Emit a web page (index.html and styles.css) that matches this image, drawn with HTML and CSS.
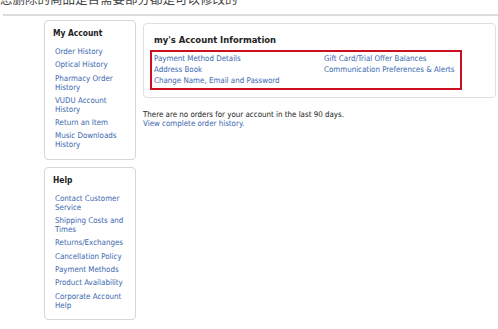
FILE: index.html
```html
<!DOCTYPE html>
<html lang="en">
<head>
    <meta charset="UTF-8">
    <title>Your Account</title>
    <link rel="stylesheet" href="styles.css">
</head>
<body>
    <div class="topnote"><span>您删除的商品是否需要部分都是可以修改的</span></div>
    <div class="rule"></div>

    <div class="page">
        <aside class="sidebar">
            <div class="side-box">
                <h3>My Account</h3>
                <ul>
                    <li><a href="#">Order History</a></li>
                    <li><a href="#">Optical History</a></li>
                    <li><a href="#">Pharmacy Order History</a></li>
                    <li><a href="#">VUDU Account History</a></li>
                    <li><a href="#">Return an Item</a></li>
                    <li><a href="#">Music Downloads History</a></li>
                </ul>
            </div>
            <div class="side-box">
                <h3>Help</h3>
                <ul>
                    <li><a href="#">Contact Customer Service</a></li>
                    <li><a href="#">Shipping Costs and Times</a></li>
                    <li><a href="#">Returns/Exchanges</a></li>
                    <li><a href="#">Cancellation Policy</a></li>
                    <li><a href="#">Payment Methods</a></li>
                    <li><a href="#">Product Availability</a></li>
                    <li><a href="#">Corporate Account Help</a></li>
                </ul>
            </div>
        </aside>

        <main class="content">
            <div class="info-box">
                <h2>my's Account Information</h2>
                <div class="highlight">
                    <ul class="col-left">
                        <li><a href="#">Payment Method Details</a></li>
                        <li><a href="#">Address Book</a></li>
                        <li><a href="#">Change Name, Email and Password</a></li>
                    </ul>
                    <ul class="col-right">
                        <li><a href="#">Gift Card/Trial Offer Balances</a></li>
                        <li><a href="#">Communication Preferences &amp; Alerts</a></li>
                    </ul>
                </div>
            </div>
            <p class="orders">There are no orders for your account in the last 90 days.<br>
                <a href="#">View complete order history.</a></p>
        </main>
    </div>
</body>
</html>
```

FILE: styles.css
```css
* {
    margin: 0;
    padding: 0;
    box-sizing: border-box;
}

body {
    background: #ffffff;
    color: #222;
    font-family: "DejaVu Sans Condensed", "DejaVu Sans", sans-serif;
    font-size: 7.9px;
}

a {
    color: #3b68b0;
    text-decoration: none;
}

ul {
    list-style: none;
}

.topnote {
    height: 6px;
    overflow: hidden;
}

.topnote span {
    display: block;
    margin-top: -8px;
    font-family: "Noto Sans CJK SC", sans-serif;
    font-size: 12.5px;
    line-height: 13px;
    color: #444;
    white-space: nowrap;
}

.rule {
    margin: 8px 0 0 3px;
    height: 2px;
    background: #dcdcdc;
}

.page {
    display: flex;
    align-items: flex-start;
    gap: 7px;
    padding: 4px 2px 0 44px;
}

.sidebar {
    flex: 0 0 92px;
    display: flex;
    flex-direction: column;
    gap: 7px;
}

.side-box {
    border: 1px solid #d6d6d6;
    border-radius: 4px;
    padding: 7px 4px 5px 8px;
}

.side-box h3 {
    font-size: 8.4px;
    color: #222;
    margin-bottom: 9px;
}

.side-box li {
    padding-left: 2px;
    line-height: 9px;
    margin-bottom: 4.3px;
}

.content {
    flex: 1;
    min-width: 0;
    padding-top: 3px;
}

.info-box {
    border: 1px solid #e0e0e0;
    border-radius: 4px;
    padding: 10px 33px 7px 6px;
}

.info-box h2 {
    font-size: 9.4px;
    color: #222;
    margin: 0 0 5px 4px;
}

.highlight {
    border: 2px solid #cc1020;
    display: flex;
    padding: 1px 0 2px 2px;
}

.col-left {
    flex: 0 0 170px;
}

.col-right {
    flex: 1;
}

.highlight li {
    line-height: 11px;
}

.orders {
    margin-top: 12px;
    line-height: 9px;
    color: #222;
}
```
